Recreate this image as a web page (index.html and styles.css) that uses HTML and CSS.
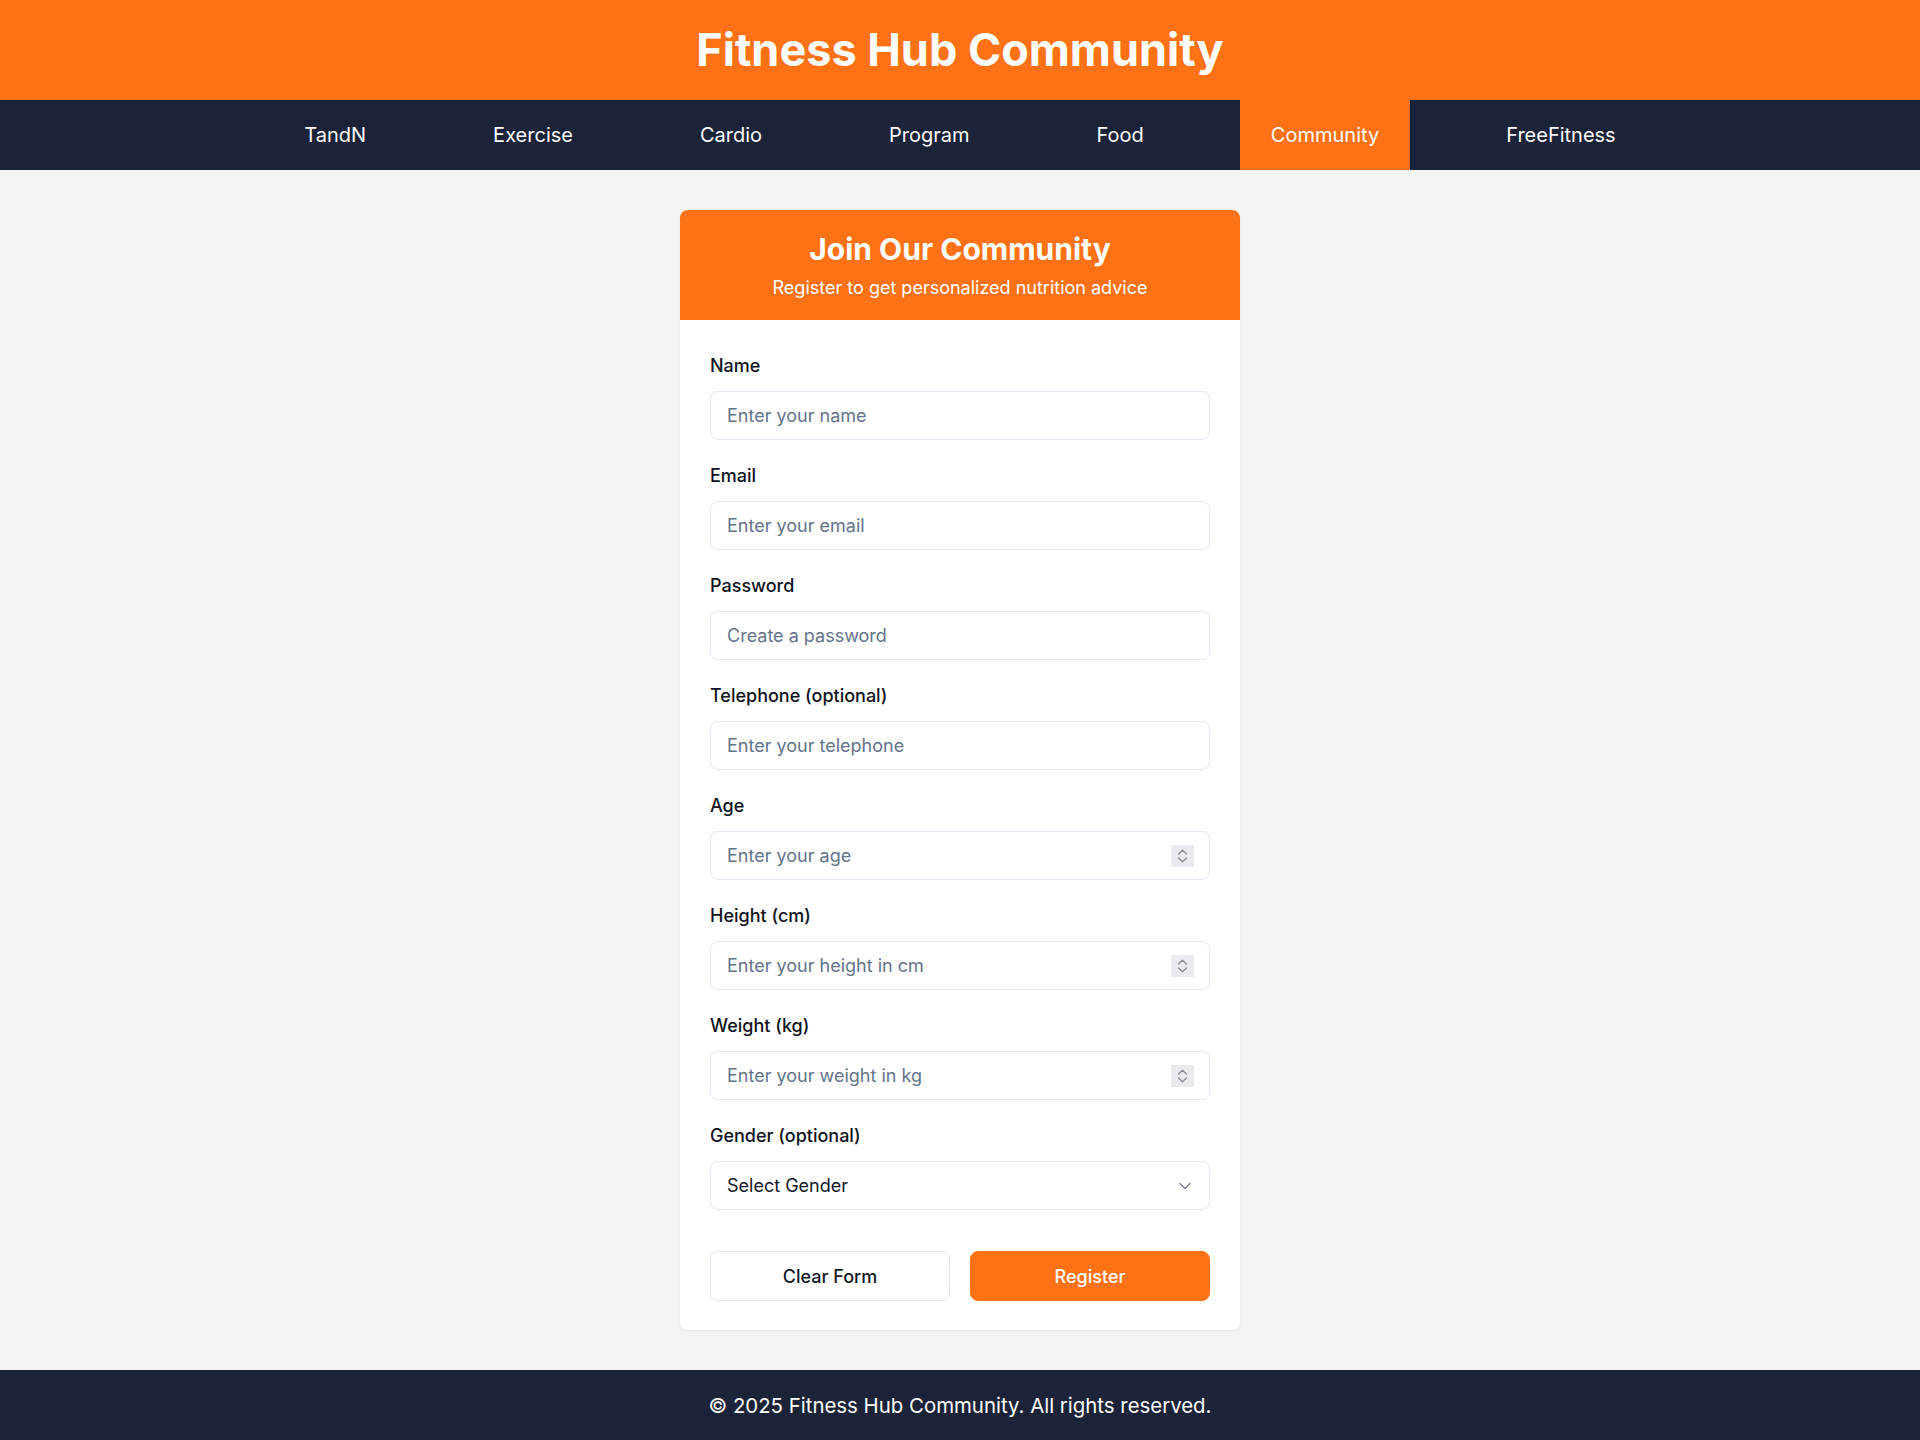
FILE: index.html
```html
<!DOCTYPE html>
<html lang="en">
<head>
<meta charset="utf-8">
<title>Fitness Hub Community</title>
<link rel="stylesheet" href="styles.css">
</head>
<body>
<header class="site-header">
  <h1 class="site-title">Fitness Hub Community</h1>
</header>
<nav class="main-nav">
  <a class="nav-link" href="#">TandN</a>
  <a class="nav-link" href="#">Exercise</a>
  <a class="nav-link" href="#">Cardio</a>
  <a class="nav-link" href="#">Program</a>
  <a class="nav-link" href="#">Food</a>
  <a class="nav-link active" href="#">Community</a>
  <a class="nav-link" href="#">FreeFitness</a>
</nav>
<main class="page">
  <section class="card">
    <div class="card-head">
      <h2 class="card-title">Join Our Community</h2>
      <p class="card-sub">Register to get personalized nutrition advice</p>
    </div>
    <form class="card-body">
      <div class="group">
        <label class="label" for="name">Name</label>
        <input class="field" id="name" type="text" placeholder="Enter your name">
      </div>
      <div class="group">
        <label class="label" for="email">Email</label>
        <input class="field" id="email" type="email" placeholder="Enter your email">
      </div>
      <div class="group">
        <label class="label" for="password">Password</label>
        <input class="field" id="password" type="password" placeholder="Create a password">
      </div>
      <div class="group">
        <label class="label" for="tel">Telephone (optional)</label>
        <input class="field" id="tel" type="tel" placeholder="Enter your telephone">
      </div>
      <div class="group">
        <label class="label" for="age">Age</label>
        <div class="num-wrap">
          <input class="field" id="age" type="number" placeholder="Enter your age">
          <svg class="spin" width="23" height="22" viewBox="0 0 23 22" aria-hidden="true"><rect width="23" height="22" fill="#ebebef"/><path d="M7.5 9 L11.5 5.2 L15.5 9 M7.5 13 L11.5 16.8 L15.5 13" fill="none" stroke="#8c8c98" stroke-width="1.4" stroke-linecap="round" stroke-linejoin="round"/></svg>
        </div>
      </div>
      <div class="group">
        <label class="label" for="height">Height (cm)</label>
        <div class="num-wrap">
          <input class="field" id="height" type="number" placeholder="Enter your height in cm">
          <svg class="spin" width="23" height="22" viewBox="0 0 23 22" aria-hidden="true"><rect width="23" height="22" fill="#ebebef"/><path d="M7.5 9 L11.5 5.2 L15.5 9 M7.5 13 L11.5 16.8 L15.5 13" fill="none" stroke="#8c8c98" stroke-width="1.4" stroke-linecap="round" stroke-linejoin="round"/></svg>
        </div>
      </div>
      <div class="group">
        <label class="label" for="weight">Weight (kg)</label>
        <div class="num-wrap">
          <input class="field" id="weight" type="number" placeholder="Enter your weight in kg">
          <svg class="spin" width="23" height="22" viewBox="0 0 23 22" aria-hidden="true"><rect width="23" height="22" fill="#ebebef"/><path d="M7.5 9 L11.5 5.2 L15.5 9 M7.5 13 L11.5 16.8 L15.5 13" fill="none" stroke="#8c8c98" stroke-width="1.4" stroke-linecap="round" stroke-linejoin="round"/></svg>
        </div>
      </div>
      <div class="group">
        <label class="label" for="gender">Gender (optional)</label>
        <div class="select-wrap">
          <select class="field select" id="gender">
            <option>Select Gender</option>
            <option>Male</option>
            <option>Female</option>
            <option>Other</option>
          </select>
          <svg class="chevron" width="12" height="8" viewBox="0 0 12 8" aria-hidden="true"><path d="M1 1.5 L6 6.5 L11 1.5" fill="none" stroke="#7b8190" stroke-width="1.4" stroke-linecap="round" stroke-linejoin="round"/></svg>
        </div>
      </div>
      <div class="actions">
        <button class="btn btn-clear" type="reset">Clear Form</button>
        <button class="btn btn-primary" type="button">Register</button>
      </div>
    </form>
  </section>
</main>
<footer class="site-footer">
  <p class="footer-text">© 2025 Fitness Hub Community. All rights reserved.</p>
</footer>
</body>
</html>
```
FILE: styles.css
```css
* { box-sizing: border-box; }
html, body { margin: 0; padding: 0; }
body {
  font-family: Inter, "Noto Sans", sans-serif;
  background: #f4f4f4;
  color: #111827;
}
.site-header {
  background: #ff7115;
  height: 100px;
  display: flex;
  align-items: center;
  justify-content: center;
}
.site-title {
  margin: 0;
  color: #fff;
  font-size: 45px;
  font-weight: 700;
  line-height: 1.2;
}
.main-nav {
  background: #1b2339;
  height: 70px;
  display: flex;
  justify-content: center;
  gap: 65px;
}
.nav-link {
  display: flex;
  align-items: center;
  padding: 0 31px;
  color: #fff;
  text-decoration: none;
  font-size: 20px;
}
.nav-link.active { background: #ff7115; }
.page {
  padding: 40px 0;
  display: flex;
  justify-content: center;
}
.card {
  width: 560px;
  background: #fff;
  border-radius: 8px;
  overflow: hidden;
  box-shadow: 0 1px 3px rgba(0,0,0,0.06);
}
.card-head {
  background: #ff7115;
  color: #fff;
  text-align: center;
  padding: 21px 20px 0;
  height: 110px;
}
.card-title {
  margin: 0 0 8px;
  font-size: 30px;
  line-height: 36px;
  font-weight: 700;
}
.card-sub {
  margin: 0;
  font-size: 18px;
  line-height: 26px;
}
.card-body {
  padding: 33px 30px 29px;
}
.group { margin-bottom: 23px; }
.label {
  display: block;
  font-size: 18px;
  line-height: 26px;
  font-weight: 500;
  color: #0f1220;
  margin-bottom: 12px;
}
.field {
  display: block;
  width: 100%;
  height: 49px;
  padding: 0 15px 0 16px;
  border: 1px solid #e2e8f0;
  border-radius: 8px;
  background: #fff;
  font-family: Inter, "Noto Sans", sans-serif;
  font-size: 18px;
  color: #111827;
  outline: none;
}
.field::placeholder { color: #64748b; opacity: 1; }
.field::-webkit-inner-spin-button,
.field::-webkit-outer-spin-button { -webkit-appearance: none; margin: 0; }
.field[type=number] { -moz-appearance: textfield; }
.num-wrap { position: relative; }
.spin {
  position: absolute;
  right: 16px;
  top: 14px;
  pointer-events: none;
}
.select-wrap { position: relative; }
.select {
  appearance: none;
  -webkit-appearance: none;
  color: #111827;
}
.chevron {
  position: absolute;
  right: 19px;
  top: 21px;
  pointer-events: none;
}
.actions {
  display: grid;
  grid-template-columns: 1fr 1fr;
  gap: 20px;
  padding-top: 18px;
}
.btn {
  height: 50px;
  border-radius: 8px;
  font-family: Inter, "Noto Sans", sans-serif;
  font-size: 18px;
  font-weight: 500;
  cursor: pointer;
}
.btn-clear {
  background: #fff;
  border: 1px solid #e2e8f0;
  color: #111827;
}
.btn-primary {
  background: #ff7115;
  border: 1px solid #ff7115;
  color: #fff;
}
.site-footer {
  background: #1b2339;
  height: 70px;
  display: flex;
  align-items: center;
  justify-content: center;
}
.footer-text {
  margin: 0;
  color: #fff;
  font-size: 20.4px;
}
```
